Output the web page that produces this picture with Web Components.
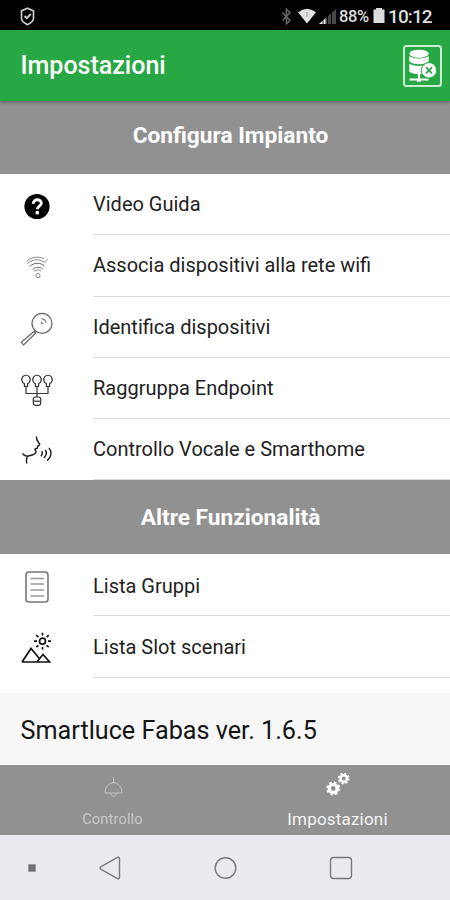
<!DOCTYPE html>
<html lang="it">
<head>
<meta charset="utf-8">
<title>Impostazioni</title>
<style>
  body {
    margin: 0;
    background: #fff;
    font-family: Roboto, "Liberation Sans", sans-serif;
  }
</style>
</head>
<body>
<settings-page></settings-page>

<script>
(function () {
  // Line icons share a 36x36 box.
  const ICONS = {
    help: `
      <circle cx="18" cy="18.5" r="12.6" fill="#000"/>
      <path d="M14.300 15.700c0-5.200 8-5 8-.5 0 3.100-3.900 2.900-3.900 6" fill="none" stroke="#fff" stroke-width="2.900"/>
      <circle cx="18.300" cy="24.700" r="1.900" fill="#fff"/>`,
    wifi: `
      <g fill="none" stroke="#888" stroke-width="1">
        <path d="M7.500 12.200c5.500-4.800 12.500-5 17.800-2.200M8.400 14.600c5-4.400 11.500-5 15.800-1.800 2 .5 3.200-1 4.400-2.400"/>
        <path d="M10.500 17.600c4.600-4.300 11-4.400 15-.5M13.700 20.400c3.300-2.800 7.200-2.800 10.100-.1" stroke="#666"/>
        <path d="M15.300 22.200c2.300-1.700 4.700-1.700 6.700 0"/>
        <circle cx="19" cy="26.600" r="2.100"/>
      </g>`,
    search: `
      <g fill="none" stroke="#666" stroke-width="1.200">
        <circle cx="23" cy="12.400" r="10"/>
        <circle cx="23" cy="12.400" r="8.900" stroke="#ccc" stroke-width=".6"/>
        <path d="M15.800 19.700l-13.500 11.600 2.300 2.600 12.600-12.100M15 20.500l2 2"/>
        <path d="M22.500 7.800c3 0 4.500 1.700 4.700 4.300M22.500 10.800v1.500h2" stroke="#888"/>
      </g>`,
    group: `
      <g fill="none" stroke="#333" stroke-width="1.200">
        <path d="M5.400 14.500v-2.800a4.200 4.400 0 1 1 3.200 0v2.800zM16.400 14.500v-2.800a4.200 4.400 0 1 1 3.200 0v2.800zM27.400 14.500v-2.800a4.200 4.400 0 1 1 3.200 0v2.800z"/>
        <path d="M7 15v6.500h22V15M18 15v10"/>
        <rect x="14.300" y="25" width="7.400" height="8.300" rx="2.200"/>
        <path d="M14.300 29.200h7.400"/>
      </g>`,
    voice: `
      <g fill="none" stroke="#222" stroke-width="1.500">
        <path d="M17.400 3.500c-.3 3 .6 4.300 2.300 6.300 1.400 1.600 1.400 2.300-.7 3.200-.8.400-.3 1.300-.6 1.900-.4.800-1.700.5-2.300 1.100-.8.900 1.400 1.500.8 3.400-.7 2.300-5 2.800-8.800 3.900-2.300-.1-4-1.900-4.600-2.900M8.200 23.500c-.8 2.200-1 4-.5 7"/>
        <path d="M22.600 18.300c1.300 1.500.8 3.300-.7 5M26.300 17c1.800 2.600.8 5.700-1.500 8M30 15c3.400 4 2.300 8.800-1.800 12.600"/>
      </g>`,
    list: `
      <rect x="7" y="3" width="22" height="30" rx="3" fill="none" stroke="#777" stroke-width="1.600"/>
      <path d="M11.500 9.500h13.500M11.500 15h13.500M11.500 21h13.500M11.500 27h13.500" stroke="#999" stroke-width="1.500"/>`,
    scene: `
      <g transform="translate(-1 1)" fill="none" stroke="#111" stroke-width="1.700">
        <path d="M4 31h27.500L25 23.500l-3.500 4.200-8.500-10.200L4 31M19 31l2.500-3.300"/>
        <circle cx="24.500" cy="10.200" r="3"/>
        <path d="M24.500 1.800v2.600M24.500 15.900v2.600M16 10.200h3M30 10.200h3M18.300 4.200l2.100 1.900M30.700 4.200l-2.100 1.900M18.300 16.200l2.100-1.900M30.700 16.200l-2.100-1.900"/>
      </g>`,
    lamp: `
      <g transform="translate(0 5.500)" fill="none" stroke="#c4c4c4" stroke-width="1">
        <path d="M18.500 4v5M16.800 9h3.400M10 19.500c0-6 3.800-10.200 8.500-10.200S27 13.500 27 19.500zM14.500 19.700l4 3.300 4-3.300"/>
      </g>`,
    gears: `
      <g transform="translate(-.3 -1.800)" fill="none" stroke="#fff">
        <circle cx="13.500" cy="22.300" r="4" stroke-width="3.200"/>
        <circle cx="13.500" cy="22.300" r="6" stroke-width="2" stroke-dasharray="2.500 2.210"/>
        <circle cx="24" cy="12.300" r="3.300" stroke-width="2.600"/>
        <circle cx="24" cy="12.300" r="5" stroke-width="1.800" stroke-dasharray="2 1.930"/>
      </g>`
  };

  class LineIcon extends HTMLElement {
    constructor() {
      super();
      this.attachShadow({ mode: "open" });
    }

    connectedCallback() {
      this.shadowRoot.innerHTML = `
        <style>
        :host{
            display:block;
            width:36px;
            height:36px;
            flex:none;
        }

        svg{
            display:block;
        }
        </style>
        <svg width="36" height="36" viewBox="0 0 36 36">${ICONS[this.getAttribute("name")]}</svg>
        `;
    }
  }

  class StatusBar extends HTMLElement {
    constructor() {
      super();
      this.attachShadow({ mode: "open" });
      this.shadowRoot.innerHTML = `
        <style>
        :host{
            display:flex;
            align-items:center;
            height:30px;
            padding:2px 19px 0 20px;
            box-sizing:border-box;
            background:#000;
            color:#dedede;
        }

        svg{
            flex:none;
        }

        .right{
            display:flex;
            align-items:center;
            margin-left:auto;
        }

        .percent{
            width:31px;
            margin-left:2px;
            font-size:16.5px;
            font-weight:500;
            letter-spacing:-.4px;
            white-space:nowrap;
        }

        .time{
            font-size:19px;
            font-weight:500;
            letter-spacing:-.9px;
            width:43px;
            margin-left:3px;
            white-space:nowrap;
        }
        </style>
        <svg width="15" height="19" viewBox="0 0 15 19" fill="none" stroke="#c8c8c8">
          <path d="M7.500 1.200l6 2.700v7.300c0 2.800-3 5-6 6.500-3-1.500-6-3.700-6-6.500V3.900z" stroke-width="1.700"/>
          <path d="M4.500 9l2.300 2.200 4-4.200" stroke-width="1.900"/>
        </svg>
        <div class="right">
          <svg width="11" height="17" viewBox="0 0 11 17" fill="none" stroke="#666" stroke-width="1.500">
            <path d="M1.500 4.500l7.500 8-3.600 3.300V1.200L9 4.500l-7.500 8"/>
          </svg>
          <svg width="18" height="16" viewBox="0 0 18 16" style="margin-left:6px">
            <path d="M0 4.300Q9-2.700 18 4.300L9 15.500z" fill="#e2e2e2"/>
            <path d="M9 4v5" stroke="#aaa" stroke-width="1.500"/>
          </svg>
          <svg width="18" height="16" viewBox="0 0 18 16" style="margin-left:3px">
            <path d="M0 16L17 1v15z" fill="#474747"/>
            <path d="M0 16l6.500-5.700V16z" fill="#e8e8e8"/>
            <path d="M4 9v7M8.500 6v10M12.500 3v13" stroke="#000" stroke-width=".8"/>
          </svg>
          <div class="percent">88%</div>
          <svg width="12" height="16" viewBox="0 0 12 16" style="margin-left:3px">
            <path d="M3 0h6v1.500h2.500V15H.5V1.500H3z" fill="#dcdcdc"/>
          </svg>
          <div class="time">10:12</div>
        </div>
        `;
    }
  }

  class AppHeader extends HTMLElement {
    constructor() {
      super();
      this.attachShadow({ mode: "open" });
      this.shadowRoot.innerHTML = `
        <style>
        :host{
            display:flex;
            align-items:center;
            justify-content:space-between;
            height:71px;
            padding:0 8.500px 0 20.500px;
            box-sizing:border-box;
            background:#28a745;
            color:#fff;
            box-shadow:0 1px 3px rgba(0,0,0,.4);
            position:relative;
        }

        .title{
            font-size:25px;
            font-weight:500;
        }
        </style>
        <div class="title"><slot></slot></div>
        <svg width="39" height="42" viewBox="0 0 39 42">
          <rect x="1" y="1" width="37" height="40" rx="2.500" fill="none" stroke="#c9edd1" stroke-width="2"/>
          <g fill="#fff">
            <ellipse cx="16" cy="8.700" rx="9.700" ry="4"/>
            <path d="M6.300 11c3 3.300 16.400 3.300 19.400 0v5.300c-3 3.800-16.400 3.800-19.400 0z"/>
            <path d="M6.300 18.500c3 3.300 16.400 3.300 19.400 0v8c-3 3.500-16.400 3.500-19.400 0z"/>
            <path d="M14.900 28h2.200v5.500h8.400v2h-7.200c-.8 2-4 2-4.800 0H6.500v-2h8.400z"/>
          </g>
          <circle cx="26" cy="25.300" r="7.700" fill="#fff" stroke="#28a745" stroke-width="1"/>
          <path d="M23 22.300l6 6m0-6l-6 6" stroke="#28a745" stroke-width="1.800"/>
        </svg>
        `;
    }
  }

  class SectionHeader extends HTMLElement {
    constructor() {
      super();
      this.attachShadow({ mode: "open" });
      this.shadowRoot.innerHTML = `
        <style>
        :host{
            display:flex;
            align-items:center;
            justify-content:center;
            flex:none;
            height:var(--height, 74px);
            padding-left:11px;
            padding-bottom:var(--lift, 0);
            box-sizing:border-box;
            background:#919191;
            color:#fff;
            font-size:22.700px;
            font-weight:700;
        }
        </style>
        <slot></slot>
        `;
    }
  }

  class SettingsRow extends HTMLElement {
    constructor() {
      super();
      this.attachShadow({ mode: "open" });
    }

    connectedCallback() {
      this.shadowRoot.innerHTML = `
        <style>
        :host{
            display:flex;
            align-items:center;
            height:var(--row-height, 61.250px);
            padding-left:19px;
            box-sizing:border-box;
            background:#fff;
        }

        line-icon{
            margin-top:3px;
        }

        .label{
            display:flex;
            align-items:center;
            flex:1;
            height:100%;
            margin-left:38px;
            padding-top:var(--label-drop, 0);
            box-sizing:border-box;
            border-bottom:1px solid #dedede;
            color:#222;
            font-size:20px;
            white-space:nowrap;
        }
        </style>
        <line-icon name="${this.getAttribute("icon")}"></line-icon>
        <div class="label"><slot></slot></div>
        `;
    }
  }

  class VersionBar extends HTMLElement {
    constructor() {
      super();
      this.attachShadow({ mode: "open" });
      this.shadowRoot.innerHTML = `
        <style>
        :host{
            display:flex;
            align-items:center;
            flex:none;
            height:72px;
            margin-top:15.250px;
            padding:2px 0 0 20.500px;
            box-sizing:border-box;
            background:#f7f7f7;
            border-top:1px solid #f1f1f1;
            color:#151515;
            font-size:25.200px;
        }
        </style>
        <slot></slot>
        `;
    }
  }

  class TabItem extends HTMLElement {
    constructor() {
      super();
      this.attachShadow({ mode: "open" });
    }

    connectedCallback() {
      this.shadowRoot.innerHTML = `
        <style>
        :host{
            display:flex;
            flex:1;
            flex-direction:column;
            align-items:center;
            padding-top:3px;
            box-sizing:border-box;
            color:#c8c8c8;
            font-size:14.500px;
            letter-spacing:.2px;
        }

        :host([active]){
            color:#f4f4f4;
            font-size:17px;
        }

        .text{
            height:30px;
            line-height:32px;
        }

        :host([active]) .text{
            line-height:31px;
        }
        </style>
        <line-icon name="${this.getAttribute("icon")}"></line-icon>
        <div class="text"><slot></slot></div>
        `;
    }
  }

  class TabBar extends HTMLElement {
    constructor() {
      super();
      this.attachShadow({ mode: "open" });
      this.shadowRoot.innerHTML = `
        <style>
        :host{
            display:flex;
            flex:none;
            height:70px;
            background:#919191;
        }
        </style>
        <slot></slot>
        `;
    }
  }

  class SystemNav extends HTMLElement {
    constructor() {
      super();
      this.attachShadow({ mode: "open" });
      this.shadowRoot.innerHTML = `
        <style>
        :host{
            display:grid;
            grid-template-columns:64px 92px 138px 94px 62px;
            align-items:center;
            justify-items:center;
            flex:none;
            height:65px;
            padding-top:1px;
            box-sizing:border-box;
            background:#e9ebee;
        }

        svg{
            display:block;
            fill:none;
            stroke:#77797c;
            stroke-width:1.400;
        }
        </style>
        <svg width="24" height="24" viewBox="0 0 24 24"><path d="M8.300 8.300h7.400v7.400H8.300z" fill="#707174" stroke="none"/></svg>
        <svg width="24" height="24" viewBox="0 0 24 24"><path d="M2.700 10.800L19.500 1.500q2-.8 2 1.500v18q0 2.300-2 1.500L2.700 13.200q-1.400-1.200 0-2.400z"/></svg>
        <svg width="24" height="24" viewBox="0 0 24 24"><circle cx="12.500" cy="12" r="10.300"/></svg>
        <svg width="24" height="24" viewBox="0 0 24 24"><rect x="1.500" y="1.500" width="21" height="21" rx="3"/></svg>
        `;
    }
  }

  class SettingsPage extends HTMLElement {
    constructor() {
      super();
      this.attachShadow({ mode: "open" });
      this.shadowRoot.innerHTML = `
        <style>
        :host{
            display:flex;
            flex-direction:column;
            width:450px;
            height:900px;
            overflow:hidden;
        }

        .rows{
            flex:none;
        }

        .rows.other{
            --row-height:61.750px;
            --label-drop:2px;
        }

        .first{
            --height:73px;
            --lift:4px;
        }
        </style>
        <status-bar></status-bar>
        <app-header>Impostazioni</app-header>
        <section-header class="first">Configura Impianto</section-header>
        <div class="rows">
          <settings-row icon="help">Video Guida</settings-row>
          <settings-row icon="wifi">Associa dispositivi alla rete wifi</settings-row>
          <settings-row icon="search">Identifica dispositivi</settings-row>
          <settings-row icon="group">Raggruppa Endpoint</settings-row>
          <settings-row icon="voice">Controllo Vocale e Smarthome</settings-row>
        </div>
        <section-header>Altre Funzionalità</section-header>
        <div class="rows other">
          <settings-row icon="list">Lista Gruppi</settings-row>
          <settings-row icon="scene">Lista Slot scenari</settings-row>
        </div>
        <version-bar>Smartluce Fabas ver. 1.6.5</version-bar>
        <tab-bar>
          <tab-item icon="lamp">Controllo</tab-item>
          <tab-item icon="gears" active>Impostazioni</tab-item>
        </tab-bar>
        <system-nav></system-nav>
        `;
    }
  }

  customElements.define("line-icon", LineIcon);
  customElements.define("status-bar", StatusBar);
  customElements.define("app-header", AppHeader);
  customElements.define("section-header", SectionHeader);
  customElements.define("settings-row", SettingsRow);
  customElements.define("version-bar", VersionBar);
  customElements.define("tab-item", TabItem);
  customElements.define("tab-bar", TabBar);
  customElements.define("system-nav", SystemNav);
  customElements.define("settings-page", SettingsPage);
})();
</script>
</body>
</html>
